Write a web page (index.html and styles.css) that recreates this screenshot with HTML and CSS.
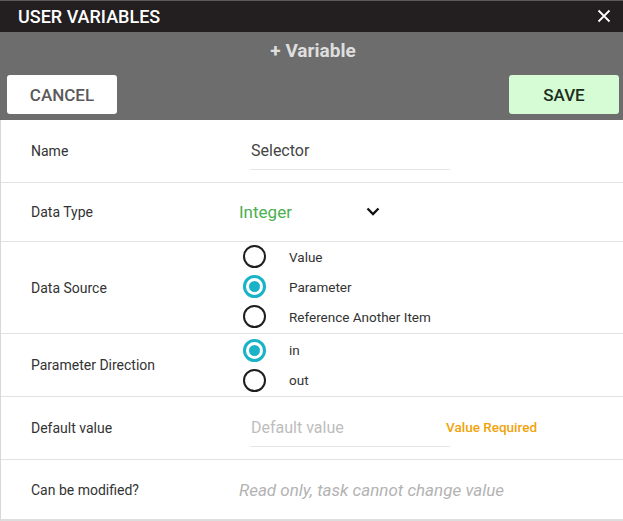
FILE: index.html
```html
<!DOCTYPE html>
<html>
<head>
<meta charset="utf-8">
<link rel="stylesheet" href="styles.css">
</head>
<body>
<div class="dialog">
  <header class="titlebar">
    <span class="title">USER VARIABLES</span>
    <span class="close"><svg width="14" height="14" viewBox="0 0 14 14"><path d="M1.5 1.5 L12.5 12.5 M12.5 1.5 L1.5 12.5" stroke="#fff" stroke-width="1.8" fill="none"/></svg></span>
  </header>
  <div class="toolbar">
    <div class="toolbar-title">+ Variable</div>
    <div class="actions">
      <button class="btn cancel">CANCEL</button>
      <button class="btn save">SAVE</button>
    </div>
  </div>
  <div class="form">
    <div class="row r-name">
      <div class="label">Name</div>
      <div class="value"><div class="input">Selector</div></div>
    </div>
    <div class="row r-type">
      <div class="label">Data Type</div>
      <div class="value">
        <div class="select"><span class="sel-text">Integer</span>
          <svg class="chev" width="14" height="9" viewBox="0 0 14 9"><path d="M1.5 1.5 L7 7 L12.5 1.5" stroke="#111" stroke-width="2.3" fill="none"/></svg>
        </div>
      </div>
    </div>
    <div class="row r-source">
      <div class="label">Data Source</div>
      <div class="value radios">
        <div class="radio"><span class="dot"></span><span class="rlabel">Value</span></div>
        <div class="radio on"><span class="dot"></span><span class="rlabel">Parameter</span></div>
        <div class="radio"><span class="dot"></span><span class="rlabel">Reference Another Item</span></div>
      </div>
    </div>
    <div class="row r-dir">
      <div class="label">Parameter Direction</div>
      <div class="value radios">
        <div class="radio on"><span class="dot"></span><span class="rlabel">in</span></div>
        <div class="radio"><span class="dot"></span><span class="rlabel">out</span></div>
      </div>
    </div>
    <div class="row r-default">
      <div class="label">Default value</div>
      <div class="value inline">
        <div class="input placeholder">Default value</div>
        <span class="required">Value Required</span>
      </div>
    </div>
    <div class="row r-mod">
      <div class="label">Can be modified?</div>
      <div class="value"><span class="readonly">Read only, task cannot change value</span></div>
    </div>
  </div>
</div>
</body>
</html>
```

FILE: styles.css
```css
* { box-sizing: border-box; }
html, body { margin: 0; padding: 0; background: #fff; }
body { font-family: Roboto, "Noto Sans", sans-serif; color: #333; }
.dialog { width: 623px; }

.titlebar {
  height: 32px;
  background: #231f20;
  border-top: 1px solid #5a5a5a;
  display: flex;
  align-items: center;
  justify-content: space-between;
  padding: 0 12px 1px 18px;
}
.title { color: #fff; font-size: 18px; font-weight: 500; }
.close { display: flex; align-items: center; }

.toolbar {
  background: #6d6d6d;
  height: 88px;
  padding: 8px 4px 0 7px;
}
.toolbar-title {
  text-align: center;
  color: #dedede;
  font-size: 19px;
  font-weight: 700;
  line-height: 22px;
}
.actions {
  display: flex;
  justify-content: space-between;
  margin-top: 13px;
}
.btn {
  width: 110px;
  height: 39px;
  border: none;
  border-radius: 3px;
  font-family: Roboto, sans-serif;
  font-size: 17px;
  font-weight: 500;
  padding: 0;
}
.cancel { background: #fff; color: #5a5a5a; }
.save { background: #d6fcd6; color: #1c2e1c; }

.form { border-left: 1px solid #d8d8d8; border-bottom: 2px solid #ddd; }
.row {
  display: grid;
  grid-template-columns: 238px 1fr;
  align-items: center;
  border-bottom: 1px solid #e2e2e2;
}
.row:last-child { border-bottom: none; }
.label { padding-left: 30px; font-size: 14px; color: #333; }
.r-name { height: 63px; }
.r-type { height: 59px; }
.r-source { height: 92px; }
.r-dir { height: 63px; }
.r-default { height: 63px; }
.r-mod { height: 59px; }

.input {
  margin-left: 11px;
  width: 200px;
  padding: 8px 0 8px 1px;
  line-height: 20px;
  font-size: 16px;
  color: #444;
  border-bottom: 1px solid #e6e6e6;
}
.r-name .input { margin-top: 1px; }
.placeholder { color: #bdbdbd; margin-top: 1px; }
.inline { display: flex; align-items: center; }
.required { color: #f0a30a; font-size: 13.5px; font-weight: 500; margin-left: -4px; margin-top: -3px; }

.select {
  width: 141px;
  display: flex;
  align-items: center;
  justify-content: space-between;
}
.sel-text { color: #4caf50; font-size: 17px; }
.chev { margin-right: 0; margin-top: -1px; }

.radios { display: flex; flex-direction: column; padding-left: 4px; }
.radio { height: 30px; display: flex; align-items: center; }
.dot {
  width: 23px; height: 23px;
  border: 2.5px solid #1e1e1e;
  border-radius: 50%;
  position: relative;
  flex: none;
}
.radio.on .dot { border: 3px solid #19b3c8; }
.radio.on .dot::after {
  content: "";
  position: absolute;
  left: 3px; top: 3px;
  width: 11px; height: 11px;
  border-radius: 50%;
  background: #19b3c8;
}
.rlabel { margin-left: 23px; font-size: 13.5px; color: #333; }
.r-source .radios { margin-top: -2px; }
.r-dir .radios { margin-top: 0; }

.readonly { color: #b3b3b3; font-size: 17px; font-style: italic; }
```
